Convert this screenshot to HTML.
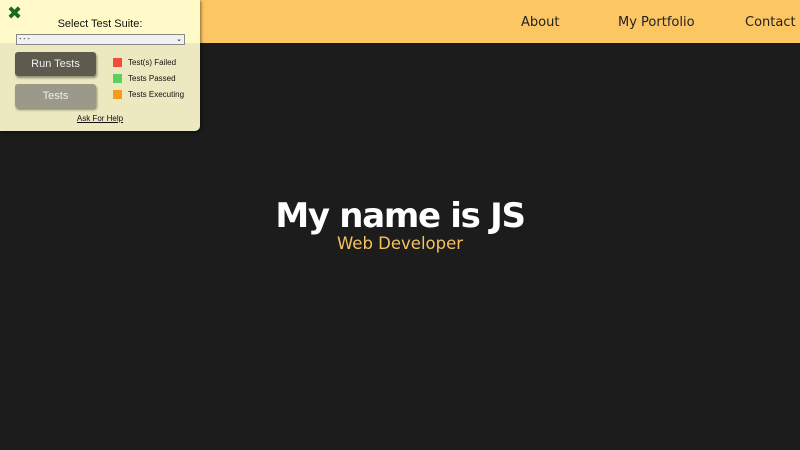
<!DOCTYPE html><html><head><style>
body{margin:0;width:800px;height:450px;background:#1c1c1c;position:relative;overflow:hidden;font-family:"Liberation Sans",sans-serif}
.hdr{position:absolute;left:0;top:0;width:800px;height:43px;background:#fcc662}
.nav{position:absolute;top:15px;font-size:13px;color:#222;font-family:"DejaVu Sans",sans-serif}
.panel{position:absolute;left:0;top:0;width:200px;height:131px;background:#ece8c0;border-radius:0 0 5px 0;box-shadow:1px 1px 3px rgba(0,0,0,.5)}
.top{position:absolute;left:0;top:0;width:200px;height:43px;background:#fffac8}
.btn{position:absolute;left:15px;width:81px;height:24px;border-radius:3px;color:#eee;font-size:11px;text-align:center;line-height:25px;box-shadow:1px 2px 2px rgba(0,0,0,.4)}
.lg{position:absolute;left:113px;font-size:8px;color:#111}
.lg i{position:absolute;left:0;top:0;width:9px;height:9px}
.lg span{position:absolute;left:15px;top:0;white-space:nowrap}
</style></head><body>
<div class="hdr"></div>
<div class="nav" style="left:521px">About</div>
<div class="nav" style="left:618px">My Portfolio</div>
<div class="nav" style="left:745px">Contact</div>
<div style="position:absolute;top:196px;width:800px;text-align:center;color:#fff;font:bold 34px 'DejaVu Sans',sans-serif;letter-spacing:-1.3px">My name is JS</div>
<div style="position:absolute;top:234px;width:800px;text-align:center;color:#f5c261;font:16.5px 'DejaVu Sans',sans-serif">Web Developer</div>
<div class="panel"><div class="top"></div>
<div style="position:absolute;left:7px;top:3px;font:bold 18px 'DejaVu Sans';color:#1a6b1a">✖</div>
<div style="position:absolute;left:0;width:200px;top:18px;text-align:center;font-size:11px;color:#111">Select Test Suite:</div>
<div style="position:absolute;left:16px;top:34px;width:165px;height:9px;background:#f1f1f1;border:1px solid #888;font-size:7px;line-height:9px;padding-left:2px;box-sizing:content-box">- - -<span style="position:absolute;right:2px">⌄</span></div>
<div class="btn" style="top:52px;background:#5e5a4e">Run Tests</div>
<div class="btn" style="top:84px;background:#9b998a">Tests</div>
<div class="lg" style="top:58px"><i style="background:#f04b3c"></i><span>Test(s) Failed</span></div>
<div class="lg" style="top:74px"><i style="background:#5bd05b"></i><span>Tests Passed</span></div>
<div class="lg" style="top:90px"><i style="background:#f59a1c"></i><span>Tests Executing</span></div>
<div style="position:absolute;left:0;width:200px;top:114px;text-align:center;font-size:8px;text-decoration:underline;color:#111">Ask For Help</div>
</div>
</body></html>
